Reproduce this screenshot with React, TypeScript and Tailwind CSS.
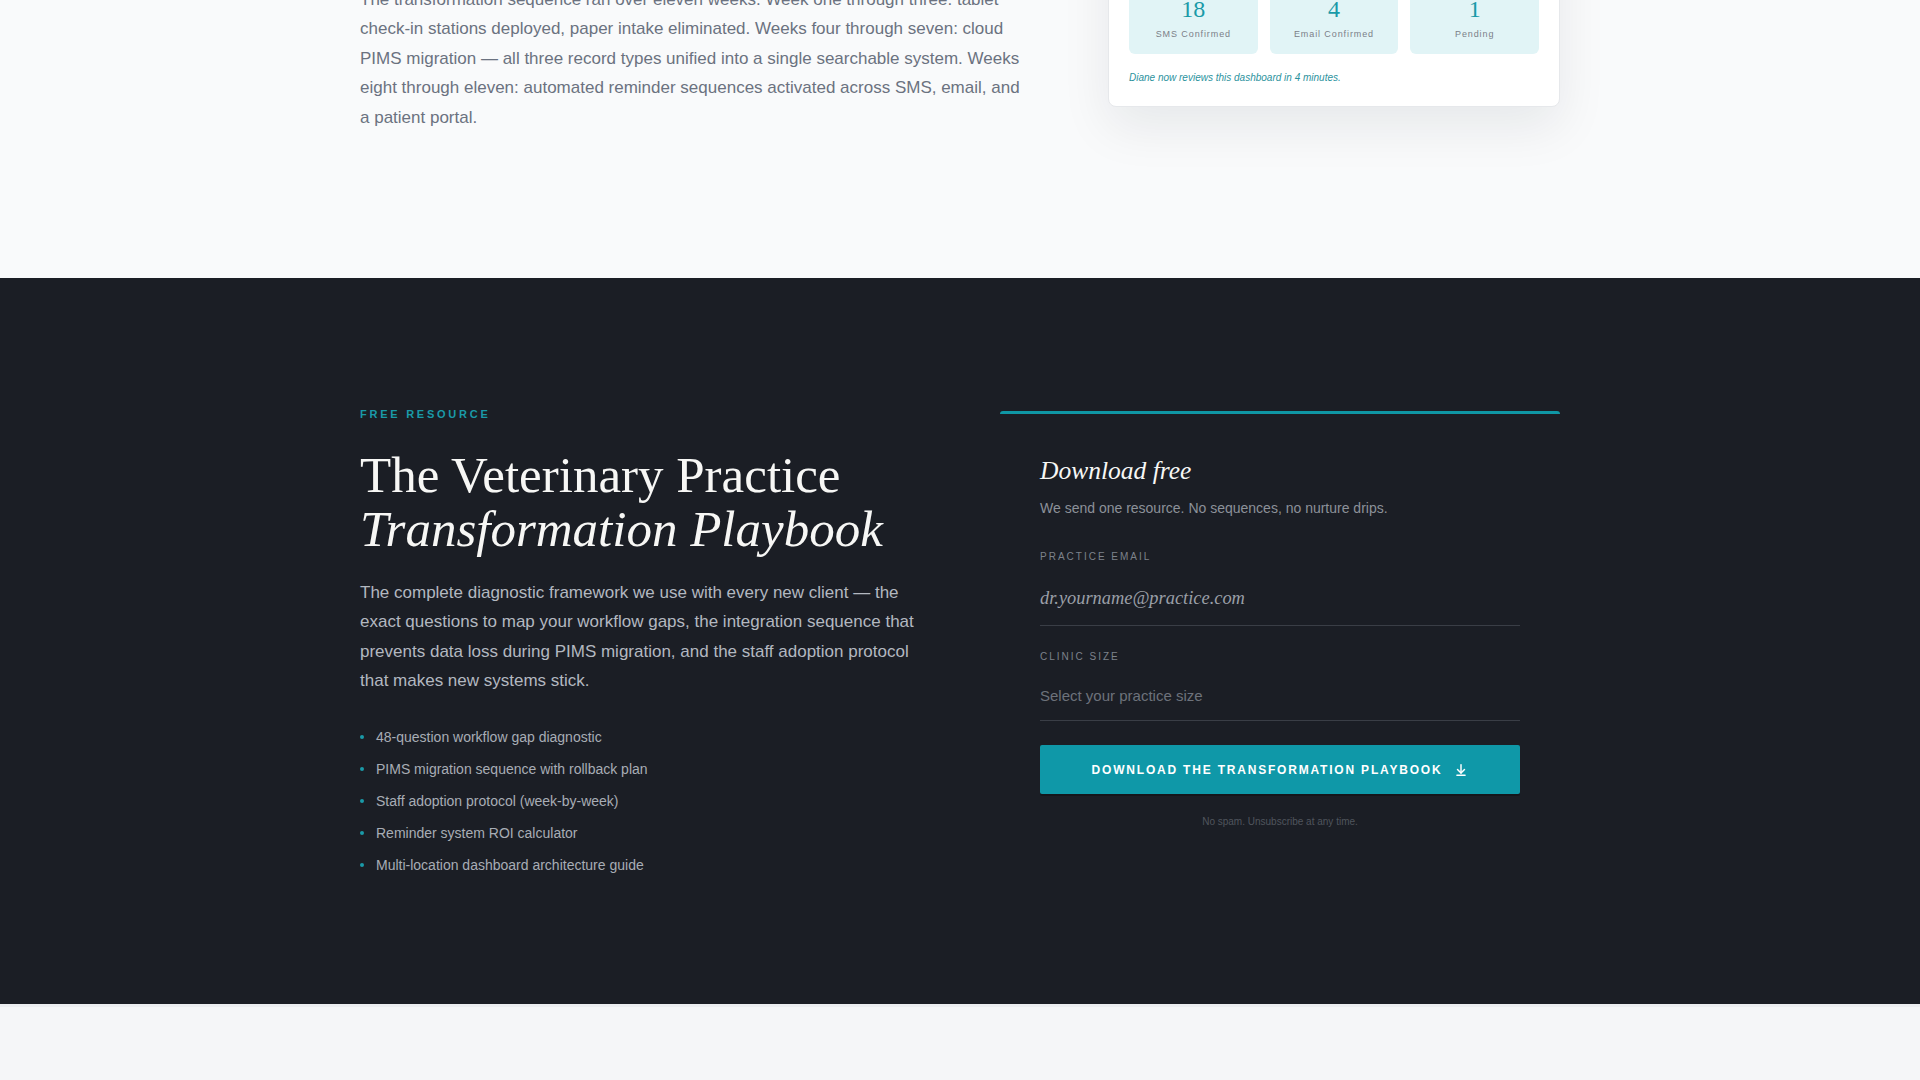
import * as React from 'react';
import { ArrowDownToLine } from 'lucide-react';

const sans = "font-['Liberation_Sans',Arial,sans-serif]";
const serif = "font-['Liberation_Serif','Times_New_Roman',serif]";

const stats = [
  { value: '18', label: 'SMS Confirmed' },
  { value: '4', label: 'Email Confirmed' },
  { value: '1', label: 'Pending' },
];

const bullets = [
  '48-question workflow gap diagnostic',
  'PIMS migration sequence with rollback plan',
  'Staff adoption protocol (week-by-week)',
  'Reminder system ROI calculator',
  'Multi-location dashboard architecture guide',
];

function ReminderCard() {
  return (
    <div className="w-[452px] -mt-[61px] bg-white border border-[#e6e8eb] rounded-lg shadow-[0_20px_50px_rgba(15,23,42,0.08)] p-5">
      <div className="flex items-center justify-between mb-4 text-[14px] leading-5 text-[#374151]">
        <span className="font-semibold">Reminder confirmations</span>
        <span className="text-[11px] text-[#9ca3af]">This week</span>
      </div>
      <div className="grid grid-cols-3 gap-3">
        {stats.map((s) => (
          <div key={s.label} className="bg-[#e1f4f6] rounded-md py-[14px] flex flex-col items-center">
            <span className={`${serif} text-[24px] leading-[28px] text-[#1a9aa8]`}>{s.value}</span>
            <span className="mt-[5px] text-[9px] leading-[12px] tracking-[0.1em] text-[#7b8088]">{s.label}</span>
          </div>
        ))}
      </div>
      <p className="mt-4 text-[10px] leading-4 italic text-[#2b929d]">
        Diane now reviews this dashboard in 4 minutes.
      </p>
    </div>
  );
}

function CaseStudyTail() {
  return (
    <section className="bg-[#f9fafb] pb-[146px]">
      <div className="w-[1200px] mx-auto flex items-start justify-between -mt-[15px]">
        <p className="w-[665px] text-[17px] leading-[29.4px] text-[#6b7280]">
          The transformation sequence ran over eleven weeks. Week one through three: tablet
          check-in stations deployed, paper intake eliminated. Weeks four through seven: cloud
          PIMS migration — all three record types unified into a single searchable system. Weeks
          eight through eleven: automated reminder sequences activated across SMS, email, and
          a patient portal.
        </p>
        <ReminderCard />
      </div>
    </section>
  );
}

function PlaybookOffer() {
  return (
    <div>
      <p className="text-[11px] leading-4 font-semibold tracking-[0.25em] text-[#1a9aa8] mb-[26px]">
        FREE RESOURCE
      </p>
      <h2 className={`${serif} text-[51px] leading-[54px] text-[#f7f7f5] font-normal`}>
        The Veterinary Practice
        <br />
        <em>Transformation Playbook</em>
      </h2>
      <p className="mt-[22px] w-[560px] text-[17px] leading-[29.4px] text-[#b3b8c0]">
        The complete diagnostic framework we use with every new client — the exact questions
        to map your workflow gaps, the integration sequence that prevents data loss during
        PIMS migration, and the staff adoption protocol that makes new systems stick.
      </p>
      <ul className="mt-[30px] flex flex-col gap-[10px]">
        {bullets.map((b) => (
          <li key={b} className="flex items-center gap-[12px] text-[14px] leading-[22px] text-[#a8adb5]">
            <span className="w-[4px] h-[4px] rounded-full bg-[#1a9aa8] shrink-0" />
            {b}
          </li>
        ))}
      </ul>
    </div>
  );
}

function DownloadForm() {
  return (
    <div className="mt-[5px] border-t-[3px] border-[#0f97a5] rounded-t-[3px] px-10 pt-[40px] pb-10">
      <h3 className={`${serif} italic text-[25.5px] leading-[34px] text-[#f7f7f5]`}>Download free</h3>
      <p className="mt-[10px] text-[14px] leading-5 text-[#8c9199]">
        We send one resource. No sequences, no nurture drips.
      </p>

      <label className="block mt-8 text-[10px] leading-[14px] tracking-[0.2em] text-[#7d828b]">
        PRACTICE EMAIL
      </label>
      <div className="mt-2 h-[54px] flex items-center border-b border-[#3a3e46]">
        <span className={`${serif} italic text-[18.4px] text-[#9a9fa7]`}>dr.yourname@practice.com</span>
      </div>

      <label className="block mt-6 text-[10px] leading-[14px] tracking-[0.2em] text-[#7d828b]">
        CLINIC SIZE
      </label>
      <div className="mt-2 h-[49px] flex items-center border-b border-[#3a3e46]">
        <span className="text-[15px] text-[#6d727b]">Select your practice size</span>
      </div>

      <button className="mt-6 w-full h-[49px] bg-[#0f98a8] rounded-[2px] flex items-center justify-center gap-3 text-white text-[12px] font-bold tracking-[0.15em] shadow-[0_2px_0_rgba(0,0,0,0.25)]">
        DOWNLOAD THE TRANSFORMATION PLAYBOOK
        <ArrowDownToLine size={14} strokeWidth={2.5} />
      </button>
      <p className="mt-5 text-center text-[10px] leading-4 text-[#50555d]">No spam. Unsubscribe at any time.</p>
    </div>
  );
}

export default function App() {
  return (
    <div className={`${sans} min-h-screen bg-[#f5f6f8] overflow-hidden`}>
      <CaseStudyTail />
      <section className="bg-[#1b1e25] py-32">
        <div className="w-[1200px] mx-auto grid grid-cols-2 gap-20 items-start">
          <PlaybookOffer />
          <DownloadForm />
        </div>
      </section>
      <section className="border-t-[3px] border-[#eceef1] bg-[#f5f6f8] h-[200px]" />
    </div>
  );
}
